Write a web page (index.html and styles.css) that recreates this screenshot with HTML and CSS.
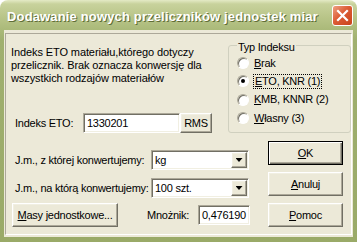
FILE: index.html
```html
<!DOCTYPE html>
<html lang="pl">
  <head>
    <meta charset="UTF-8" />
    <title>Dodawanie nowych przeliczników jednostek miar</title>
    <link rel="stylesheet" href="styles.css">
  </head>
  <body>
    <div class="window">
      <header class="titlebar">
        <span class="title">Dodawanie nowych przeliczników jednostek miar</span>
        <button class="close" aria-label="Zamknij">
          <svg width="13" height="13" viewBox="0 0 13 13">
            <path d="M2 2 L11 11 M11 2 L2 11" stroke="#fff" stroke-width="2.2" stroke-linecap="square" />
          </svg>
        </button>
      </header>
      <main class="client">
        <div class="panel">
          <section class="top">
            <div class="intro">
              <p>Indeks ETO materiału,którego dotyczy<br>przelicznik. Brak oznacza konwersję dla<br>wszystkich rodzajów materiałów</p>
              <div class="eto-row">
                <label>Indeks ETO:</label>
                <span class="field eto">1330201</span>
                <button class="btn rms">RMS</button>
              </div>
            </div>
            <div class="group">
              <span class="legend">Typ Indeksu</span>
              <ul class="radios">
                <li><i class="radio"></i><span><u>B</u>rak</span></li>
                <li><i class="radio checked"></i><span class="focus"><u>E</u>TO, KNR (1)</span></li>
                <li><i class="radio"></i><span><u>K</u>MB, KNNR (2)</span></li>
                <li><i class="radio"></i><span><u>W</u>łasny (3)</span></li>
              </ul>
            </div>
          </section>
          <section class="bottom">
            <div class="rows">
              <div class="row">
                <label>J.m., z której konwertujemy:</label>
                <div class="field combo"><span>kg</span><i class="drop"></i></div>
              </div>
              <div class="row">
                <label>J.m., na którą konwertujemy:</label>
                <div class="field combo"><span>100 szt.</span><i class="drop"></i></div>
              </div>
              <div class="row last">
                <button class="btn masy"><u>M</u>asy jednostkowe...</button>
                <label class="mult">Mnożnik:</label>
                <span class="field mult-field">0,476190</span>
              </div>
            </div>
            <div class="actions">
              <button class="btn default"><u>O</u>K</button>
              <button class="btn"><u>A</u>nuluj</button>
              <button class="btn"><u>P</u>omoc</button>
            </div>
          </section>
        </div>
      </main>
    </div>
  </body>
</html>
```

FILE: styles.css
```css
* {
  box-sizing: border-box;
}
body {
  margin: 0;
  background: #fff;
  font-family: "Liberation Sans", Arial, sans-serif;
  font-size: 11px;
  line-height: 13px;
  letter-spacing: -0.25px;
  color: #000;
}
.window {
  width: 357px;
  height: 242px;
  display: flex;
  flex-direction: column;
  border-radius: 8px 8px 0 0;
  overflow: hidden;
  background: linear-gradient(#e4eac6, #c8d29c 4px, #bac68a 16px, #abba7a 29px, #a0b06f 40px, #9aaa68);
}
.titlebar {
  height: 30px;
  flex-shrink: 0;
  display: flex;
  align-items: center;
  padding: 0 4px 0 7px;
}
.title {
  flex: 1;
  margin-top: 3px;
  color: #fff;
  font-size: 13px;
  font-weight: bold;
  letter-spacing: 0.15px;
  white-space: nowrap;
  text-shadow: 1px 1px 0 #5f6d37;
}
.close {
  width: 21px;
  height: 21px;
  padding: 0;
  border: 1px solid #fff;
  border-radius: 3px;
  background: linear-gradient(135deg, #eea184, #dc5c34 45%, #c9441c);
  display: flex;
  align-items: center;
  justify-content: center;
}
.client {
  flex: 1;
  display: flex;
  margin: 0 4px 5px;
  padding: 3px 1px 2px;
  background: #ece9d8;
}
.panel {
  flex: 1;
  display: flex;
  flex-direction: column;
  border: 1px solid;
  border-color: #aca899 #fff #fff #aca899;
}
.top {
  display: flex;
  align-items: flex-start;
  padding-top: 11px;
}
.intro {
  flex: 1;
  padding: 1px 0 0 5px;
  p {
    margin: 0;
    letter-spacing: -0.1px;
  }
}
.eto-row {
  display: flex;
  align-items: center;
  margin-top: 28px;
  padding-left: 4px;
  label {
    width: 68px;
  }
}
.field {
  height: 20px;
  padding: 3px 0 0 3px;
  background: #fff;
  border: 1px solid;
  border-color: #aca899 #fff #fff #aca899;
  box-shadow: inset 1px 1px #716f64, inset -1px -1px #f1efe2;
  white-space: nowrap;
}
.eto {
  width: 97px;
}
.btn {
  font: inherit;
  letter-spacing: inherit;
  color: #000;
  padding: 0;
  background: #ece9d8;
  border: 1px solid;
  border-color: #fff #716f64 #716f64 #fff;
  box-shadow: inset -1px -1px #aca899, inset 1px 1px #f1efe2;
  display: flex;
  align-items: center;
  justify-content: center;
}
.rms {
  width: 32px;
  height: 20px;
}
.group {
  flex-shrink: 0;
  width: 123px;
  height: 88px;
  border: 1px solid #d0d0bf;
  border-radius: 3px;
}
.legend {
  display: block;
  width: max-content;
  margin: -5px 0 0 8px;
  padding: 0 1px;
  background: #ece9d8;
}
.radios {
  list-style: none;
  margin: 0;
  padding: 0 0 0 8px;
  li {
    display: flex;
    align-items: center;
    gap: 5px;
    height: 18px;
  }
  li + li {
    margin-top: 0.4px;
  }
}
.radio {
  width: 12px;
  height: 12px;
  border-radius: 50%;
  background: #fff;
  border: 1px solid;
  border-color: #aca899 #fff #fff #aca899;
  box-shadow: inset 1px 1px #716f64;
  display: flex;
  align-items: center;
  justify-content: center;
  &.checked::after {
    content: "";
    width: 4px;
    height: 4px;
    border-radius: 50%;
    background: #000;
  }
}
.focus {
  outline: 1px dotted #000;
  padding: 0 1px;
}
.bottom {
  display: flex;
  margin-top: 8px;
}
.rows {
  padding: 9px 0 0 6px;
}
.row {
  display: flex;
  align-items: center;
  height: 20px;
  label {
    width: 139px;
    padding-left: 3px;
  }
  & + & {
    margin-top: 8px;
  }
  &.last {
    height: 24px;
    margin-top: 5px;
  }
}
.combo {
  width: 98px;
  display: flex;
  align-items: center;
  padding: 1px 1px 1px 2px;
  span {
    flex: 1;
    padding-left: 1px;
  }
}
.drop {
  width: 16px;
  height: 16px;
  background: #ece9d8;
  border: 1px solid;
  border-color: #fff #716f64 #716f64 #fff;
  box-shadow: inset -1px -1px #aca899, inset 1px 1px #f1efe2;
  display: flex;
  align-items: center;
  justify-content: center;
  &::after {
    content: "";
    width: 7px;
    height: 4px;
    background: #000;
    clip-path: polygon(0 0, 100% 0, 50% 100%);
  }
}
.masy {
  width: 106px;
  height: 24px;
}
.row .mult {
  width: 51px;
  padding-left: 0;
  margin-left: 29px;
}
.mult-field {
  width: 52px;
}
.actions {
  margin-left: auto;
  margin-right: 8px;
  display: flex;
  flex-direction: column;
  gap: 7px;
  .btn {
    width: 75px;
    height: 24px;
  }
}
.default {
  border-color: #000;
  box-shadow: inset 1px 1px #fff, inset -1px -1px #716f64, inset -2px -2px #aca899;
}
```
